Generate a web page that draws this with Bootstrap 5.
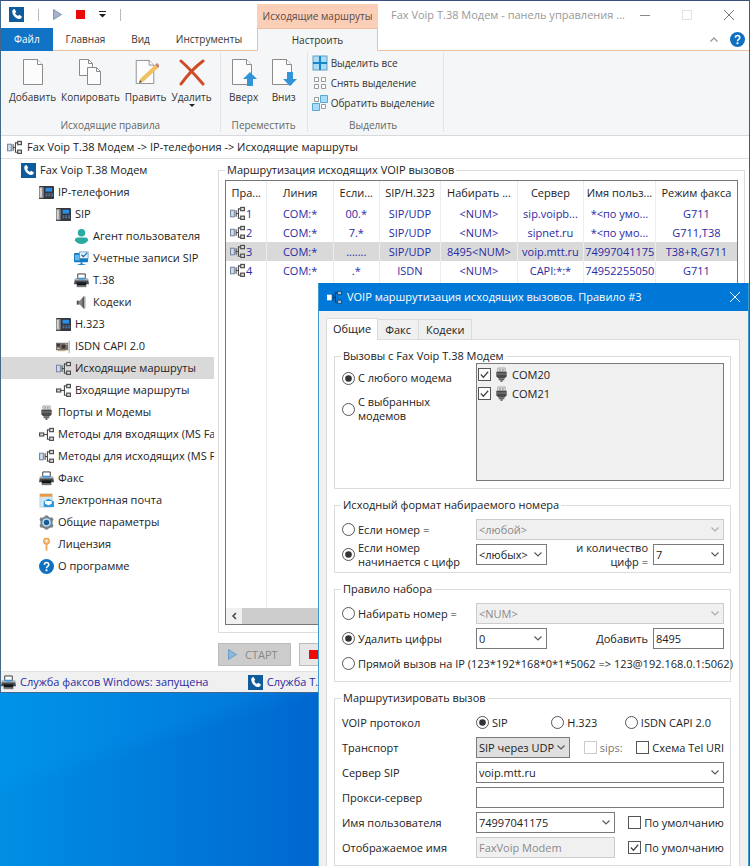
<!DOCTYPE html>
<html lang="ru">
<head>
<meta charset="utf-8">
<meta name="viewport" content="width=device-width, initial-scale=1">
<title>Fax Voip T.38 Модем - панель управления</title>
<link href="https://cdn.jsdelivr.net/npm/bootstrap@5.3.0/dist/css/bootstrap.min.css" rel="stylesheet">
<style>
:root{--ink:#222;--navy:#2a2aa4;--line:#dcdcdc;--peach:#eebf9f;--chev:url("data:image/svg+xml,%3Csvg xmlns='http://www.w3.org/2000/svg' viewBox='0 0 8 5'%3E%3Cpath d='M.5 .5 4 4 7.500 .5' fill='none' stroke='%23555' stroke-width='1.100'/%3E%3C/svg%3E");--chev-off:url("data:image/svg+xml,%3Csvg xmlns='http://www.w3.org/2000/svg' viewBox='0 0 8 5'%3E%3Cpath d='M.5 .5 4 4 7.500 .5' fill='none' stroke='%23aaa' stroke-width='1.100'/%3E%3C/svg%3E")}
body{font-family:"Open Sans","Noto Sans",sans-serif;font-size:11px;line-height:14px;color:var(--ink)}
button,input,select{font:inherit;color:inherit}
svg{display:block;flex:none}
.desk{min-height:100vh;overflow:hidden;background:linear-gradient(162deg,rgba(0,170,255,.16) 70%,transparent 72%),linear-gradient(90deg,#008fe4,#0067d0 43%)}
.desk-inner{height:100vh}
.win{background:#fff;border:1px solid #44688c;border-top-color:#3a5080;border-right-color:#3d5c92}
.btn-flat{border:0;background:none;padding:0}
/* title and tabs */
.top-grid{display:grid;grid-template-columns:256px 121px 1fr}
.qat{height:27px;gap:14px;padding-left:8px}
.qat-sep{width:1px;height:12px;background:#bbb}
.ctx-head{background:#fbceb8;margin-top:3px;color:#5a4a44;font-size:10px}
.cap{color:#999;padding-left:13px;padding-right:15px}
.rtab{height:23px;padding:0 13px;color:#333;border-bottom:1px solid var(--peach);font-size:10px}
.rtab-file{background:#1173c6;color:#fff;border-bottom-color:#1173c6}
.rtab-on{background:#f5f6f7;border:1px solid var(--peach);border-bottom-color:#f5f6f7}
.rline{border-bottom:1px solid var(--peach)}
/* ribbon */
.ribbon{background:#f5f6f7;border-bottom:1px solid #d8d9da;height:85px;color:#333;font-size:10px}
.rgroup{border-right:1px solid #e2e3e4;margin:2px 0 3px;padding:0 8px}
.rgroup-name{color:#666}
.big{height:60px;padding-top:5px}
.big svg{margin-bottom:4px}
.big-row{gap:5px}
.big-row-wide{gap:10px}
.small-cmd{gap:3px;height:20px}
.crumb{height:23px;gap:5px;padding-left:6px;border-bottom:1px solid #dedede}
/* tree */
.tree{width:213px;flex:none}
.tree a{display:flex;align-items:center;gap:4px;height:22px;color:var(--ink);text-decoration:none;white-space:nowrap;overflow:hidden}
.tree .l0{padding-left:20px}.tree .l1{padding-left:38px}.tree .l2{padding-left:55px}.tree .l3{padding-left:73px}
.tree .sel{background:#d9d9d9}
/* group boxes */
.gbox{border:1px solid var(--line);min-width:0;padding:0 6px 7px;margin:0}
.gbox>legend{float:none;width:auto;font-size:11px;line-height:14px;margin:0 0 0 6px;padding:0 2px;color:var(--ink)}
.gbox-list>legend{margin-left:0}
.grid-frame{border:1px solid #777;margin-top:3px}
.routes{width:100%;table-layout:fixed;text-align:center;white-space:nowrap}
.routes th,.routes td{padding:0 1px;border-right:1px solid #ececec;overflow:hidden}
.routes th:last-child,.routes td:last-child{border-right:0}
.routes th{height:23px;font-weight:400}
.routes td{height:19px;color:var(--navy)}
.routes .sel td{background:#d9d9d9}
.routes .rest td{height:328px}
.rule-no{gap:1px;padding-left:3px}
.sbar{height:16px;background:#f0f0f0}
.sbar-thumb{background:#cdcdcd}
.cmd-row{gap:8px;padding:10px 0 5px}
.cmd{height:23px;border:1px solid #bcbcbc;background:#ccc;color:#888;gap:8px;padding:0 12px 0 9px}
.cmd-stop{background:#e6e6e6;width:73px}
.status{height:21px;background:#f0f0f0;border-top:1px solid #e2e2e2;color:var(--navy)}
.status-cell{flex:0 0 33%}
/* dialog */
.dlg{left:318px;top:283px;width:431px;background:#f0f0f0;border:1px solid #3c9ccf;border-top:0}
.dlg-title{height:28px;background:#0078d7;color:#fff;gap:5px;padding:0 8px}
.dlg-body{padding:7px 8px 12px 7px}
.dtab{border:1px solid var(--line);border-bottom:0;background:#f0f0f0;height:20px;padding:0 7px;border-left-width:0}
.dtab-on{background:#fff;height:22px;border-left-width:1px;margin-bottom:-1px;padding:0 6px 2px;z-index:1}
.dpane{background:#fff;border:1px solid var(--line);padding:9px 8px 9px 7px}
.dpane .gbox{padding-left:0}
.dpane .gbox+.gbox{margin-top:9px;padding-bottom:5px}
.frows{padding:5px 0 0 7px}
.frow{display:grid;grid-template-columns:134px 1fr;grid-template-rows:25px;align-items:center}
.frow-list{display:grid;grid-template-columns:134px 1fr;padding-left:7px}
.half{display:grid;grid-template-columns:71px 1fr 71px;align-items:center;gap:5px}
.port-list{background:#f0f0f0;border:1px solid #7a7a7a;min-height:118px;padding:1px}
.port-row{height:19px}
.opt{display:flex;align-items:center;gap:3px;margin:0}
.opt-gap{margin-top:10px}
.opt .form-check-input{width:13px;height:13px;margin:0;flex:none;border:1px solid #555;background-color:#fff}
.opt .form-check-input[type=checkbox]{border-radius:0}
.opt .form-check-input:checked[type=radio]{background-image:url("data:image/svg+xml,%3Csvg xmlns='http://www.w3.org/2000/svg' viewBox='0 0 12 12'%3E%3Ccircle cx='6' cy='6' r='3.600' fill='%23333'/%3E%3C/svg%3E")}
.opt .form-check-input:checked[type=checkbox]{background-image:url("data:image/svg+xml,%3Csvg xmlns='http://www.w3.org/2000/svg' viewBox='0 0 12 12'%3E%3Cpath d='M2 6l2.800 3L10 3' fill='none' stroke='%23444' stroke-width='1.300'/%3E%3C/svg%3E")}
.opt .form-check-input:disabled{border-color:#ccc;opacity:1}
.opt-row{padding-right:13px}
.name-row{gap:13px}
.dim{color:#777}
.fld{height:21px;min-height:0;padding:0 2px;font-size:11px;line-height:14px;border:1px solid #7a7a7a;border-radius:0;color:var(--ink);background-color:#fff}
select.fld{background-image:var(--chev);background-size:8px 5px;background-position:right 4px center;padding-right:14px}
.fld:disabled{color:#8a8a8a;border-color:#ccc;background-color:#f0f0f0;opacity:1}
select.fld:disabled{background-image:var(--chev-off)}
.fld-gray{background-color:#dfdfdf}
</style>
<script src="https://cdn.jsdelivr.net/npm/bootstrap@5.3.0/dist/js/bootstrap.bundle.min.js"></script>
</head>
<body>
<svg width="0" height="0" class="position-absolute" aria-hidden="true">
<symbol id="i-app" viewBox="0 0 16 16"><rect width="16" height="16" fill="#0f5c9c"/><path d="M4 3l2-.8 1.700 3L6.500 6.500c.6 1.400 1.600 2.400 3 3l1.300-1.200 3 1.700-.8 2C9 15 1.500 8 4 3z" fill="#fff"/></symbol>
<symbol id="i-phone" viewBox="0 0 16 16"><rect y="1" width="16" height="14" rx="1" fill="#34373b"/><rect x="0" y="2" width="5" height="12" rx="1" fill="#8c8c8c"/><rect x="1" y="3" width="2" height="10" fill="#d4d4d4"/><rect x="7" y="3" width="7" height="4" fill="#2b8fe8"/><path d="M7 9h2v1H7zm3 0h2v1h-2zm3 0h2v1h-2zM7 11h2v1H7zm3 0h2v1h-2zm3 0h2v1h-2z" fill="#5f8fc8"/></symbol>
<symbol id="i-user" viewBox="0 0 16 16"><circle cx="8" cy="4" r="4" fill="#2aaaa0"/><path d="M1 12q0-3 3-3h8q3 0 3 3-2 4-7 4t-7-4z" fill="#2aaaa0"/></symbol>
<symbol id="i-acc" viewBox="0 0 16 16"><rect y="2" width="15" height="10" rx="1" fill="#1379c4"/><rect x="1" y="4" width="5" height="6" fill="#64b7ea"/><rect x="6" y="1" width="9" height="7" fill="#e8f3fb" stroke="#4e93bf" stroke-width=".8"/><path d="M8 4l2 2 4-4" fill="none" stroke="#1868a8" stroke-width="1.300"/><path d="M7 12h2v2h3v1H4v-1h3z" fill="#1379c4"/></symbol>
<symbol id="i-print" viewBox="0 0 16 16"><path d="M4 1h8v5H4z" fill="#fff" stroke="#333"/><path d="M1 6h14l1 6H0z" fill="#444a50"/><path d="M1 6h14v2H1z" fill="#aab0b5"/><path d="M5 5h6v2H5z" fill="#3a9ae0"/><rect x="3" y="10" width="10" height="5" fill="#15181b"/><path d="M3 13h10v2H3z" fill="#777"/></symbol>
<symbol id="i-snd" viewBox="0 0 16 16"><path d="M3 6h3l5-5v14l-5-5H3z" fill="#888"/><path d="M3 6h2v4H3zM9 3l2-2v14l-2-2z" fill="#555"/><path d="M12 2v12" stroke="#bbb"/></symbol>
<symbol id="i-isdn" viewBox="0 0 16 16"><rect y="4" width="13" height="8" fill="#77716c"/><path d="M1 5h3v3H1zm5 1h4v4H6z" fill="#3b3533"/><path d="M2 12h8v1H2z" fill="#b79c62"/><path d="M10 5l2 1M1 10h3" stroke="#d9d4cf"/><path d="M14 2v13" stroke="#999" stroke-width="1"/></symbol>
<symbol id="i-out" viewBox="0 0 16 16"><rect x=".6" y="4.500" width="4" height="7" fill="#cfe0f4" stroke="#76839a" stroke-width="1.100"/><path d="M6.500 4.500v7M6.500 8H9M11.500 3H9v10h2.500" fill="none" stroke="#4a4a4a" stroke-width="1.200"/><rect x="11.400" y="1.500" width="4" height="3.500" fill="#ddd" stroke="#4a4a4a" stroke-width="1.200"/><rect x="11.400" y="10.800" width="4" height="3.500" fill="#ddd" stroke="#4a4a4a" stroke-width="1.200"/></symbol>
<symbol id="i-in" viewBox="0 0 16 16"><rect x=".6" y="6.400" width="4.500" height="3.200" fill="#ddd" stroke="#4a4a4a" stroke-width="1.200"/><path d="M5 8h4M11.500 3H9v10h2.500" fill="none" stroke="#4a4a4a" stroke-width="1.200"/><rect x="11.400" y="1.500" width="4" height="3.500" fill="#ddd" stroke="#4a4a4a" stroke-width="1.200"/><rect x="11.400" y="10.800" width="4" height="3.500" fill="#ddd" stroke="#4a4a4a" stroke-width="1.200"/></symbol>
<symbol id="i-port" viewBox="0 0 16 16"><path d="M4 1h8v4H4z" fill="#e4e4e4" stroke="#999" stroke-width=".8"/><path d="M6 2h1v2H6zm3 0h1v2H9z" fill="#666"/><path d="M2.500 5h11v5l-2 2h-7l-2-2z" fill="#4a4a4a"/><path d="M3 7h10v1H3z" fill="#888"/><path d="M5 12h2v2H5zm4 0h2v2H9zM7 12h2v4H7z" fill="#666"/></symbol>
<symbol id="i-mail" viewBox="0 0 16 16"><rect x="1" y="1" width="13" height="14" fill="#cfe8f8" stroke="#b9c8d2" stroke-width=".8"/><rect x="1" y="1" width="13" height="3" fill="#ee9a44"/><path d="M5 9l5-3 6 3v6H5z" fill="#2d9be0"/><path d="M6.500 8.500h7v3L10 13l-3.500-1.500z" fill="#fff"/></symbol>
<symbol id="i-gear" viewBox="0 0 16 16"><path d="M5.500 2L6.500.5h3l1 1.500 2 .8 1.700-.3 1.300 2.500-1 1.500v3l1 1.500-1.300 2.500-1.700-.3-2 .8-1 1.500h-3l-1-1.500-2-.8-1.700.3L.5 11l1-1.500v-3L.5 5l1.300-2.500 1.700.3z" fill="#76818a"/><circle cx="8" cy="8" r="4.600" fill="#bcdcf2"/><circle cx="8" cy="8" r="2.900" fill="#175f9c"/></symbol>
<symbol id="i-key" viewBox="0 0 16 16"><circle cx="8" cy="4.500" r="3" fill="#f7c98f" stroke="#eda052" stroke-width="1.400"/><path d="M7 7h2v7l-1 1-1-1z" fill="#efa75c"/><circle cx="8" cy="4" r="1" fill="#fff"/></symbol>
<symbol id="i-help" viewBox="0 0 16 16"><circle cx="8" cy="8" r="8" fill="#0f6fc0"/><path d="M5.800 6q0-2.200 2.300-2.200T10.400 6q0 1-1.200 1.800T8 9.800" fill="none" stroke="#fff" stroke-width="1.700"/><rect x="7" y="11" width="2" height="2" fill="#fff"/></symbol>
<symbol id="i-doc" viewBox="0 0 26 28"><path d="M3.500 1.500h14l5 5v20h-19z" fill="#fcfcfc" stroke="#8b8b8b"/><path d="M17.500 1.500v5h5" fill="#fff" stroke="#8b8b8b"/></symbol>
</svg>

<div class="desk"><div class="desk-inner position-relative overflow-hidden">
<main class="win">
  <header>
    <div class="top-grid">
      <div class="qat d-flex align-items-center">
        <svg width="15" height="15"><use href="#i-app"/></svg>
        <span class="qat-sep ms-n2"></span>
        <button class="btn-flat ms-n1" aria-label="Старт"><svg width="9" height="11" viewBox="0 0 9 11"><path d="M.5.5v10l8-5z" fill="#a7b1cc" stroke="#8a95b8"/></svg></button>
        <button class="btn-flat" aria-label="Стоп"><svg width="9" height="9" viewBox="0 0 9 9"><path d="M0 0h9v9H0z" fill="#ec0909"/></svg></button>
        <button class="btn-flat" aria-label="Настройка панели"><svg width="7" height="7" viewBox="0 0 7 7"><path d="M0 .5h7" stroke="#222"/><path d="M0 3h7L3.500 6.500z" fill="#222"/></svg></button>
        <span class="qat-sep"></span>
      </div>
      <div class="ctx-head d-flex align-items-center justify-content-center text-nowrap">Исходящие маршруты</div>
      <div class="cap d-flex align-items-center text-nowrap">
        <span class="flex-grow-1">Fax Voip T.38 Модем - панель управления ...</span>
        <button class="btn-flat" aria-label="Свернуть"><svg width="10" height="10" viewBox="0 0 10 10"><path d="M0 5.500h10" stroke="#888"/></svg></button>
        <button class="btn-flat mx-4 px-2" aria-label="Развернуть" disabled><svg width="10" height="10" viewBox="0 0 10 10"><path d="M.5.5h9v9h-9z" fill="none" stroke="#e2e2e2"/></svg></button>
        <button class="btn-flat" aria-label="Закрыть"><svg width="10" height="10" viewBox="0 0 10 10"><path d="M0 0l10 10M10 0L0 10" stroke="#777"/></svg></button>
      </div>
    </div>
    <nav class="top-grid">
      <div class="d-flex">
        <button class="btn-flat rtab rtab-file">Файл</button><button class="btn-flat rtab">Главная</button><button class="btn-flat rtab">Вид</button><button class="btn-flat rtab">Инструменты</button><span class="rline flex-grow-1"></span>
      </div>
      <button class="btn-flat rtab rtab-on">Настроить</button>
      <div class="rline d-flex align-items-center justify-content-end gap-2 pe-1">
        <button class="btn-flat me-1" aria-label="Свернуть ленту"><svg width="8" height="5" viewBox="0 0 8 5"><path d="M.5 4.500L4 1l3.500 3.500" fill="none" stroke="#999" stroke-width="1.300"/></svg></button>
        <button class="btn-flat" aria-label="Справка"><svg width="15" height="15"><use href="#i-help"/></svg></button>
      </div>
    </nav>
    <div class="ribbon d-flex">
      <section class="rgroup d-flex flex-column justify-content-between align-items-center">
        <div class="big-row d-flex">
          <button class="btn-flat big d-flex flex-column align-items-center"><svg width="26" height="28"><use href="#i-doc"/></svg>Добавить</button>
          <button class="btn-flat big d-flex flex-column align-items-center"><svg width="26" height="28" viewBox="0 0 26 28"><path d="M2.500 1.500h9l4 4v12h-13z" fill="#fcfcfc" stroke="#8b8b8b"/><path d="M11.500 1.500v4h4" fill="none" stroke="#8b8b8b"/><path d="M10.500 9.500h9l4 4v13h-13z" fill="#fcfcfc" stroke="#8b8b8b"/><path d="M19.500 9.500v4h4" fill="none" stroke="#8b8b8b"/></svg>Копировать</button>
          <button class="btn-flat big d-flex flex-column align-items-center"><svg width="26" height="28" viewBox="0 0 26 28"><use href="#i-doc" width="24" height="28"/><path d="M6 25l1.500-4.500L22 7l3 3L10.500 23.500z" fill="#efc163"/><path d="M22 7l2-2 3 3-2 2z" fill="#c98274"/><path d="M6 25l1-3 2 2z" fill="#555"/></svg>Править</button>
          <button class="btn-flat big d-flex flex-column align-items-center"><svg width="26" height="28" viewBox="0 0 26 28"><path d="M2 3q10 9 22 23M24 3Q12 12 2 26" stroke="#cf4b26" stroke-width="3" stroke-linecap="round" fill="none"/></svg>Удалить<svg width="6" height="3" viewBox="0 0 6 3"><path d="M0 0h6L3 3z" fill="#222"/></svg></button>
        </div>
        <span class="rgroup-name">Исходящие правила</span>
      </section>
      <section class="rgroup d-flex flex-column justify-content-between align-items-center">
        <div class="big-row-wide d-flex">
          <button class="btn-flat big d-flex flex-column align-items-center"><svg width="30" height="28" viewBox="0 0 30 28"><use href="#i-doc" width="26" height="28"/><path d="M21 14l7 7h-4v7h-6v-7h-4z" fill="#3494d8"/></svg>Вверх</button>
          <button class="btn-flat big d-flex flex-column align-items-center"><svg width="30" height="28" viewBox="0 0 30 28"><use href="#i-doc" width="26" height="28"/><path d="M21 28l7-7h-4v-7h-6v7h-4z" fill="#3494d8"/></svg>Вниз</button>
        </div>
        <span class="rgroup-name">Переместить</span>
      </section>
      <section class="rgroup d-flex flex-column justify-content-between align-items-center ps-1">
        <div>
          <button class="btn-flat small-cmd d-flex align-items-center"><svg width="16" height="16" viewBox="0 0 16 16"><rect x="1" y="1" width="14" height="14" fill="#a9dcf7" stroke="#6b9fc0"/><path d="M8 1v14M1 8h14" stroke="#1784c8" stroke-width="2"/></svg>Выделить все</button>
          <button class="btn-flat small-cmd d-flex align-items-center"><svg width="16" height="16" viewBox="0 0 16 16"><path d="M2.500 2.500h4v4h-4zm7 0h4v4h-4zm-7 7h4v4h-4zm7 0h4v4h-4z" fill="#fff" stroke="#999"/></svg>Снять выделение</button>
          <button class="btn-flat small-cmd d-flex align-items-center"><svg width="16" height="16" viewBox="0 0 16 16"><path d="M2.500 2.500h4v4h-4zm7 7h4v4h-4z" fill="#fff" stroke="#999"/><path d="M8.500.5h7v7h-7zm-8 8h7v7h-7z" fill="#a9dcf7" stroke="#5aa6d4"/></svg>Обратить выделение</button>
        </div>
        <span class="rgroup-name">Выделить</span>
      </section>
    </div>
    <div class="crumb d-flex align-items-center"><svg width="15" height="15"><use href="#i-out"/></svg>Fax Voip T.38 Модем -&gt; IP-телефония -&gt; Исходящие маршруты</div>
  </header>

  <div class="d-flex">
    <nav class="tree" aria-label="Разделы">
      <a href="#" class="l0"><svg width="15" height="15"><use href="#i-app"/></svg>Fax Voip T.38 Модем</a>
      <a href="#" class="l1"><svg width="15" height="15"><use href="#i-phone"/></svg>IP-телефония</a>
      <a href="#" class="l2"><svg width="15" height="15"><use href="#i-phone"/></svg>SIP</a>
      <a href="#" class="l3"><svg width="15" height="15"><use href="#i-user"/></svg>Агент пользователя</a>
      <a href="#" class="l3"><svg width="15" height="15"><use href="#i-acc"/></svg>Учетные записи SIP</a>
      <a href="#" class="l3"><svg width="15" height="15"><use href="#i-print"/></svg>T.38</a>
      <a href="#" class="l3"><svg width="15" height="15"><use href="#i-snd"/></svg>Кодеки</a>
      <a href="#" class="l2"><svg width="15" height="15"><use href="#i-phone"/></svg>H.323</a>
      <a href="#" class="l2"><svg width="15" height="15"><use href="#i-isdn"/></svg>ISDN CAPI 2.0</a>
      <a href="#" class="l2 sel"><svg width="15" height="15"><use href="#i-out"/></svg>Исходящие маршруты</a>
      <a href="#" class="l2"><svg width="15" height="15"><use href="#i-in"/></svg>Входящие маршруты</a>
      <a href="#" class="l1"><svg width="15" height="15"><use href="#i-port"/></svg>Порты и Модемы</a>
      <a href="#" class="l1"><svg width="15" height="15"><use href="#i-in"/></svg>Методы для входящих (MS Fax</a>
      <a href="#" class="l1"><svg width="15" height="15"><use href="#i-out"/></svg>Методы для исходящих (MS Fa</a>
      <a href="#" class="l1"><svg width="15" height="15"><use href="#i-print"/></svg>Факс</a>
      <a href="#" class="l1"><svg width="15" height="15"><use href="#i-mail"/></svg>Электронная почта</a>
      <a href="#" class="l1"><svg width="15" height="15"><use href="#i-gear"/></svg>Общие параметры</a>
      <a href="#" class="l1"><svg width="15" height="15"><use href="#i-key"/></svg>Лицензия</a>
      <a href="#" class="l1"><svg width="15" height="15"><use href="#i-help"/></svg>О программе</a>
    </nav>
    <div class="flex-grow-1 px-1 pt-1">
      <fieldset class="gbox gbox-list">
        <legend>Маршрутизация исходящих VOIP вызовов</legend>
        <div class="grid-frame">
          <table class="routes">
            <colgroup><col style="width:8%"><col style="width:13%"><col style="width:9%"><col style="width:12%"><col style="width:15%"><col style="width:13%"><col style="width:14%"><col style="width:16%"></colgroup>
            <thead><tr><th>Пра...</th><th>Линия</th><th>Если...</th><th>SIP/H.323</th><th>Набирать ...</th><th>Сервер</th><th>Имя польз...</th><th>Режим факса</th></tr></thead>
            <tbody>
              <tr><td><span class="rule-no d-flex align-items-center"><svg width="15" height="15"><use href="#i-out"/></svg>1</span></td><td>COM:*</td><td>00.*</td><td>SIP/UDP</td><td>&lt;NUM&gt;</td><td>sip.voipb...</td><td>*&lt;по умо...</td><td>G711</td></tr>
              <tr><td><span class="rule-no d-flex align-items-center"><svg width="15" height="15"><use href="#i-out"/></svg>2</span></td><td>COM:*</td><td>7.*</td><td>SIP/UDP</td><td>&lt;NUM&gt;</td><td>sipnet.ru</td><td>*&lt;по умо...</td><td>G711,T38</td></tr>
              <tr class="sel"><td><span class="rule-no d-flex align-items-center"><svg width="15" height="15"><use href="#i-out"/></svg>3</span></td><td>COM:*</td><td>.......</td><td>SIP/UDP</td><td>8495&lt;NUM&gt;</td><td>voip.mtt.ru</td><td>74997041175</td><td>T38+R,G711</td></tr>
              <tr><td><span class="rule-no d-flex align-items-center"><svg width="15" height="15"><use href="#i-out"/></svg>4</span></td><td>COM:*</td><td>.*</td><td>ISDN</td><td>&lt;NUM&gt;</td><td>CAPI:*:*</td><td>74952255050</td><td>G711</td></tr>
              <tr class="rest"><td></td><td></td><td></td><td></td><td></td><td></td><td></td><td></td></tr>
            </tbody>
          </table>
          <div class="sbar d-flex">
            <button class="btn-flat px-1" aria-label="Прокрутить влево"><svg width="8" height="8" viewBox="0 0 8 8"><path d="M6 1L3 4l3 3" fill="none" stroke="#444" stroke-width="1.500"/></svg></button>
            <div class="sbar-thumb flex-grow-1 me-3"></div>
          </div>
        </div>
      </fieldset>
      <div class="cmd-row d-flex">
        <button class="cmd d-flex align-items-center" disabled><svg width="9" height="11" viewBox="0 0 9 11"><path d="M.5.5v10l8-5z" fill="#8db8dc" stroke="#6f9fc8"/></svg>СТАРТ</button>
        <button class="cmd cmd-stop d-flex align-items-center" aria-label="Стоп"><svg width="9" height="9" viewBox="0 0 9 9"><path d="M0 0h9v9H0z" fill="#ec0909"/></svg></button>
      </div>
    </div>
  </div>
  <footer class="status d-flex align-items-stretch text-nowrap">
    <div class="status-cell d-flex align-items-center gap-1"><svg width="15" height="15"><use href="#i-print"/></svg>Служба факсов Windows: запущена</div>
    <div class="d-flex align-items-center gap-1"><svg width="15" height="15"><use href="#i-app"/></svg>Служба T.3</div>
  </footer>
</main>

<section class="dlg position-absolute" role="dialog" aria-labelledby="dlg-name">
  <div class="dlg-title d-flex align-items-center">
    <svg width="15" height="15" viewBox="0 0 16 16"><path d="M0 5h5v6H0z" fill="#fff"/><path d="M6.500 4.500v7M6.500 8H9M11.500 3H9v10h2.500" fill="none" stroke="#12385c" stroke-width="1.200"/><rect x="11.400" y="1.500" width="4" height="3.500" fill="#9cc5e8" stroke="#234a6b"/><rect x="11.400" y="10.800" width="4" height="3.500" fill="#9cc5e8" stroke="#234a6b"/></svg>
    <span id="dlg-name" class="flex-grow-1">VOIP маршрутизация исходящих вызовов. Правило #3</span>
    <button class="btn-flat" aria-label="Закрыть"><svg width="10" height="10" viewBox="0 0 10 10"><path d="M0 0l10 10M10 0L0 10" stroke="#fff"/></svg></button>
  </div>
  <div class="dlg-body">
    <div class="d-flex align-items-end" role="tablist">
      <button class="dtab dtab-on position-relative" role="tab" aria-selected="true">Общие</button><button class="dtab" role="tab">Факс</button><button class="dtab" role="tab">Кодеки</button>
    </div>
    <form class="dpane">
      <fieldset class="gbox">
        <legend>Вызовы с Fax Voip T.38 Модем</legend>
        <div class="frow-list">
          <div class="pt-2">
            <label class="opt"><input class="form-check-input" type="radio" name="src" checked>С любого модема</label>
            <label class="opt opt-gap"><input class="form-check-input" type="radio" name="src"><span>С выбранных<br>модемов</span></label>
          </div>
          <div class="port-list">
            <label class="opt port-row"><input class="form-check-input" type="checkbox" checked><svg width="15" height="15"><use href="#i-port"/></svg>COM20</label>
            <label class="opt port-row"><input class="form-check-input" type="checkbox" checked><svg width="15" height="15"><use href="#i-port"/></svg>COM21</label>
          </div>
        </div>
      </fieldset>
      <fieldset class="gbox">
        <legend>Исходный формат набираемого номера</legend>
        <div class="frows">
          <div class="frow">
            <label class="opt"><input class="form-check-input" type="radio" name="fmt">Если номер =</label>
            <select class="form-select fld" disabled aria-label="Номер"><option>&lt;любой&gt;</option></select>
          </div>
          <div class="frow">
            <label class="opt"><input class="form-check-input" type="radio" name="fmt" checked><span>Если номер<br>начинается с цифр</span></label>
            <div class="half">
              <select class="form-select fld" aria-label="Начальные цифры"><option>&lt;любых&gt;</option></select>
              <label for="cnt" class="text-end">и количество<br>цифр =</label>
              <select class="form-select fld" id="cnt"><option>7</option></select>
            </div>
          </div>
        </div>
      </fieldset>
      <fieldset class="gbox">
        <legend>Правило набора</legend>
        <div class="frows">
          <div class="frow">
            <label class="opt"><input class="form-check-input" type="radio" name="rule">Набирать номер =</label>
            <select class="form-select fld" disabled aria-label="Набираемый номер"><option>&lt;NUM&gt;</option></select>
          </div>
          <div class="frow">
            <label class="opt"><input class="form-check-input" type="radio" name="rule" checked>Удалить цифры</label>
            <div class="half">
              <select class="form-select fld" aria-label="Сколько цифр удалить"><option>0</option></select>
              <label for="add" class="text-end">Добавить</label>
              <input class="form-control fld" id="add" value="8495">
            </div>
          </div>
          <div class="frow text-nowrap">
            <label class="opt"><input class="form-check-input" type="radio" name="rule">Прямой вызов на IP (123*192*168*0*1*5062 =&gt; 123@192.168.0.1:5062)</label>
          </div>
        </div>
      </fieldset>
      <fieldset class="gbox">
        <legend>Маршрутизировать вызов</legend>
        <div class="frows">
          <div class="frow">
            <span>VOIP протокол</span>
            <div class="opt-row d-flex justify-content-between">
              <label class="opt"><input class="form-check-input" type="radio" name="proto" checked>SIP</label>
              <label class="opt ms-3"><input class="form-check-input" type="radio" name="proto">H.323</label>
              <label class="opt"><input class="form-check-input" type="radio" name="proto">ISDN CAPI 2.0</label>
            </div>
          </div>
          <div class="frow">
            <label for="tr">Транспорт</label>
            <div class="d-flex align-items-center justify-content-between">
              <select class="form-select fld fld-gray w-auto" id="tr"><option>SIP через UDP</option></select>
              <label class="opt dim"><input class="form-check-input" type="checkbox" disabled>sips:</label>
              <label class="opt"><input class="form-check-input" type="checkbox">Схема Tel URI</label>
            </div>
          </div>
          <div class="frow"><label for="srv">Сервер SIP</label><select class="form-select fld" id="srv"><option>voip.mtt.ru</option></select></div>
          <div class="frow"><label for="prx">Прокси-сервер</label><input class="form-control fld" id="prx"></div>
          <div class="frow">
            <label for="usr">Имя пользователя</label>
            <div class="name-row d-flex align-items-center">
              <select class="form-select fld" id="usr"><option>74997041175</option></select>
              <label class="opt text-nowrap"><input class="form-check-input" type="checkbox">По умолчанию</label>
            </div>
          </div>
          <div class="frow">
            <label for="dsp">Отображаемое имя</label>
            <div class="name-row d-flex align-items-center">
              <input class="form-control fld" id="dsp" value="FaxVoip Modem" disabled>
              <label class="opt text-nowrap"><input class="form-check-input" type="checkbox" checked>По умолчанию</label>
            </div>
          </div>
        </div>
      </fieldset>
    </form>
  </div>
</section>
</div></div>
</body>
</html>
